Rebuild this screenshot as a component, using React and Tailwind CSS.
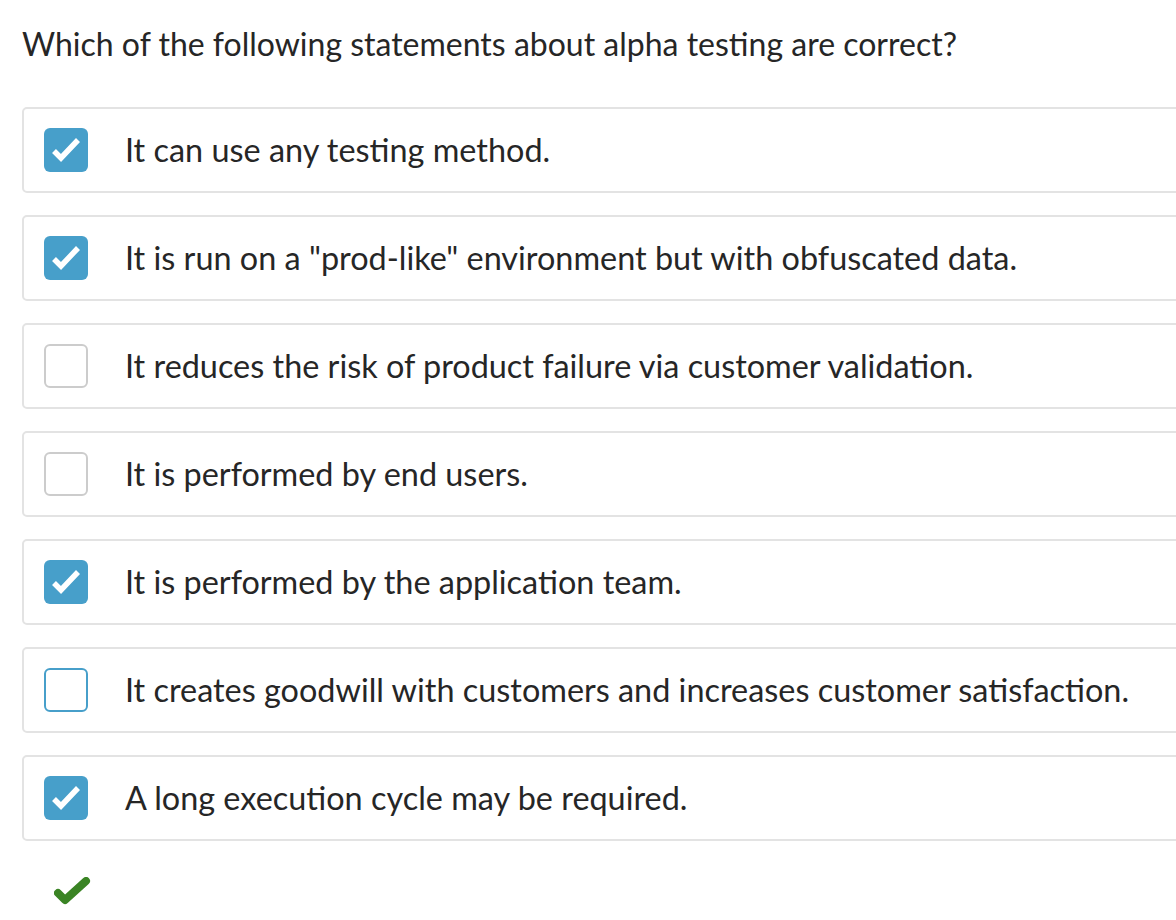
const options = [
  { text: "It can use any testing method.", checked: true },
  { text: 'It is run on a "prod-like" environment but with obfuscated data.', checked: true },
  { text: "It reduces the risk of product failure via customer validation.", checked: false },
  { text: "It is performed by end users.", checked: false },
  { text: "It is performed by the application team.", checked: true },
  { text: "It creates goodwill with customers and increases customer satisfaction.", checked: false, focused: true },
  { text: "A long execution cycle may be required.", checked: true },
];

function Checkbox({ checked, focused }) {
  if (checked) {
    return (
      <div className="w-[44px] h-[44px] shrink-0 rounded-[6px] bg-[#479fca]">
        <svg width="44" height="44" viewBox="0 0 44 44">
          <polyline points="10,23 17,30 34,12" fill="none" stroke="white" strokeWidth="5.5" strokeLinejoin="miter" />
        </svg>
      </div>
    );
  }
  return (
    <div
      className={
        focused
          ? "w-[44px] h-[44px] shrink-0 rounded-[6px] border-2 border-[#479fca] bg-white"
          : "w-[44px] h-[44px] shrink-0 rounded-[6px] border-2 border-[#cccccc] bg-white"
      }
    />
  );
}

export default function App() {
  return (
    <div className="w-[1176px] h-[920px] overflow-hidden bg-white text-[#262626] font-['Lato',sans-serif]">
      <div className="pl-[22px] pt-[24px]">
        <h1 className="text-[32px] leading-[40px] font-normal">
          Which of the following statements about alpha testing are correct?
        </h1>

        {/* options */}
        <div className="mt-[43px] flex flex-col gap-[22px] w-[1180px]">
          {options.map((opt) => (
            <div
              key={opt.text}
              className="h-[86px] border-2 border-[#e3e3e3] rounded-[5px] flex items-center pl-[20px]"
            >
              <Checkbox checked={opt.checked} focused={opt.focused} />
              <span className="ml-[37px] text-[32.4px] leading-[40px]">{opt.text}</span>
            </div>
          ))}
        </div>

        <div className="mt-[36px] pl-[32px]">
          <svg width="40" height="32" viewBox="0 0 40 32">
            <polyline points="4,16 11,23 32,4" fill="none" stroke="#3a8424" strokeWidth="8" strokeLinecap="round" strokeLinejoin="round" />
          </svg>
        </div>
      </div>
    </div>
  );
}
